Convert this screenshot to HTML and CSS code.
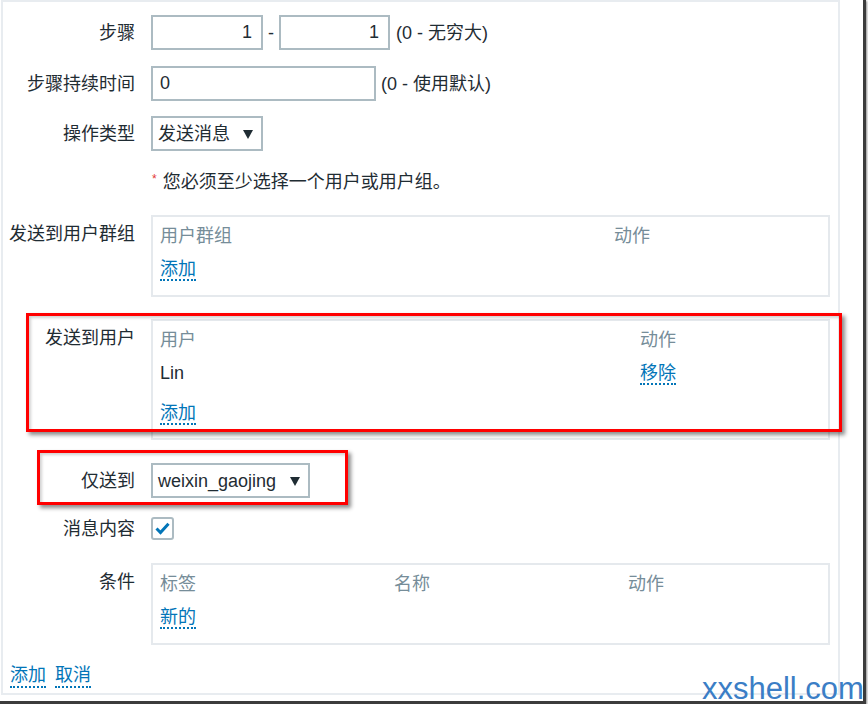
FILE: index.html
```html
<!DOCTYPE html>
<html lang="zh-CN">
<head>
<meta charset="utf-8">
<title>操作</title>
<link rel="stylesheet" href="styles.css">
</head>
<body>
<div class="frame">
  <div class="panel">
    <div class="row r1">
      <div class="label">步骤</div>
      <div class="field">
        <div class="input num">1</div>
        <span class="dash">-</span>
        <div class="input num num2">1</div>
        <span class="hint">(0 - 无穷大)</span>
      </div>
    </div>
    <div class="row r2">
      <div class="label">步骤持续时间</div>
      <div class="field">
        <div class="input wide">0</div>
        <span class="hint hint2">(0 - 使用默认)</span>
      </div>
    </div>
    <div class="row r3">
      <div class="label">操作类型</div>
      <div class="field">
        <div class="select sel1"><span>发送消息</span><i class="arrow"></i></div>
      </div>
    </div>
    <div class="row note">
      <div class="label"></div>
      <div class="field"><span class="req">*</span>您必须至少选择一个用户或用户组。</div>
    </div>
    <div class="row top rb1">
      <div class="label">发送到用户群组</div>
      <div class="tbl tbl1">
        <div class="trow"><span class="th">用户群组</span><span class="th">动作</span></div>
        <div class="trow"><span><a class="link">添加</a></span></div>
      </div>
    </div>
    <div class="row top rb2">
      <div class="label">发送到用户</div>
      <div class="tbl tbl2">
        <div class="trow"><span class="th">用户</span><span class="th">动作</span></div>
        <div class="trow"><span>Lin</span><span><a class="link">移除</a></span></div>
        <div class="trow addrow"><span><a class="link">添加</a></span></div>
      </div>
    </div>
    <div class="row r7">
      <div class="label">仅送到</div>
      <div class="field">
        <div class="select sel2"><span>weixin_gaojing</span><i class="arrow"></i></div>
      </div>
    </div>
    <div class="row r8">
      <div class="label">消息内容</div>
      <div class="field">
        <div class="check">
          <svg width="15" height="13" viewBox="0 0 15 13"><path d="M1.5 6.5 L5.5 10.5 L13.5 1.8" fill="none" stroke="#0275b8" stroke-width="3"/></svg>
        </div>
      </div>
    </div>
    <div class="row top rb3">
      <div class="label">条件</div>
      <div class="tbl tbl3">
        <div class="trow"><span class="th">标签</span><span class="th">名称</span><span class="th">动作</span></div>
        <div class="trow"><span><a class="link">新的</a></span></div>
      </div>
    </div>
    <div class="actions">
      <a class="link">添加</a>
      <a class="link">取消</a>
    </div>
  </div>
  <div class="mark mark1"></div>
  <div class="mark mark2"></div>
  <div class="watermark">xxshell.com</div>
</div>
</body>
</html>
```

FILE: styles.css
```css
html, body {
  margin: 0;
  padding: 0;
  overflow: hidden;
  background: #fff;
}
body {
  font-family: "Liberation Sans", "Noto Sans CJK SC", sans-serif;
  font-size: 18px;
  color: #1f2c33;
}
.frame {
  position: relative;
  width: 863px;
  height: 701px;
  border-right: 3px solid #3c3c3c;
  border-bottom: 3px solid #3c3c3c;
  box-shadow: 1px 1px 2px rgba(0, 0, 0, 0.45);
}
.panel {
  margin-left: 1px;
  width: 839px;
  height: 695px;
  box-sizing: border-box;
  border: 2px solid #e8ecf0;
  padding-top: 13px;
}
.row {
  display: flex;
  align-items: center;
}
.row.top {
  align-items: flex-start;
}
.label {
  flex: none;
  width: 132px;
  margin-right: 16px;
  text-align: right;
  line-height: 22px;
}
.row.top .label {
  padding-top: 8px;
}
.field {
  display: flex;
  align-items: center;
  line-height: 22px;
}
.r2 { margin-top: 16px; }
.r3 { margin-top: 15px; }
.note { margin-top: 20px; }
.rb1 { margin-top: 22px; }
.rb2 { margin-top: 22px; }
.r7 { margin-top: 23px; }
.r8 { margin-top: 19px; }
.rb3 { margin-top: 23px; }

.input {
  box-sizing: border-box;
  height: 35px;
  border: 2px solid #acbbc2;
  padding: 0 7px;
  line-height: 31px;
}
.num {
  width: 112px;
  text-align: right;
  padding-right: 9px;
}
.num2 {
  width: 111px;
}
.dash {
  margin: 0 5px 0 5px;
}
.hint {
  margin-left: 6px;
}
.wide {
  width: 225px;
}
.hint2 {
  margin-left: 5px;
}
.select {
  box-sizing: border-box;
  height: 35px;
  border: 2px solid #acbbc2;
  padding: 0 8px 0 5px;
  display: flex;
  align-items: center;
  justify-content: space-between;
  white-space: nowrap;
}
.sel1 { width: 112px; }
.sel2 { width: 159px; }
.arrow {
  flex: none;
  width: 0;
  height: 0;
  border-left: 5px solid transparent;
  border-right: 5px solid transparent;
  border-top: 9px solid #1f2c33;
  margin-top: 1px;
}
.req {
  color: #e33734;
  font-size: 12px;
  margin: 0 6px 0 1px;
  align-self: flex-start;
  line-height: 16px;
}
.tbl {
  width: 679px;
  box-sizing: border-box;
  border: 2px solid #e5e9ed;
  padding: 2px 7px 10px;
}
.tbl2 {
  padding-bottom: 9px;
}
.trow {
  display: grid;
  height: 33px;
  align-items: center;
  line-height: 22px;
}
.tbl1 .trow { grid-template-columns: 454px auto; }
.tbl2 .trow { grid-template-columns: 480px auto; }
.tbl3 .trow { grid-template-columns: 234px 234px auto; }
.tbl2 .addrow { margin-top: 7px; }
.th {
  color: #768d99;
}
.link {
  color: #0275b8;
  border-bottom: 2px dotted #0275b8;
  text-decoration: none;
}
.check {
  box-sizing: border-box;
  width: 23px;
  height: 23px;
  border: 2px solid #acbbc2;
  border-radius: 3px;
  display: flex;
  align-items: center;
  justify-content: center;
}
.check svg {
  display: block;
}
.actions {
  margin-top: 19px;
  padding-left: 7px;
  line-height: 22px;
  display: flex;
  gap: 9px;
}
.mark {
  position: absolute;
  box-sizing: border-box;
  border: 3px solid #ff0000;
  box-shadow: 3px 3px 4px rgba(0, 0, 0, 0.45), inset 2px 2px 3px rgba(0, 0, 0, 0.18);
}
.mark1 {
  left: 26px;
  top: 313px;
  width: 816px;
  height: 119px;
}
.mark2 {
  left: 37px;
  top: 450px;
  width: 311px;
  height: 55px;
}
.watermark {
  position: absolute;
  left: 702px;
  top: 676px;
  font-family: "Liberation Sans", sans-serif;
  font-size: 31px;
  line-height: 25px;
  padding-bottom: 2px;
  color: #3b7ec6;
  white-space: nowrap;
}
```
